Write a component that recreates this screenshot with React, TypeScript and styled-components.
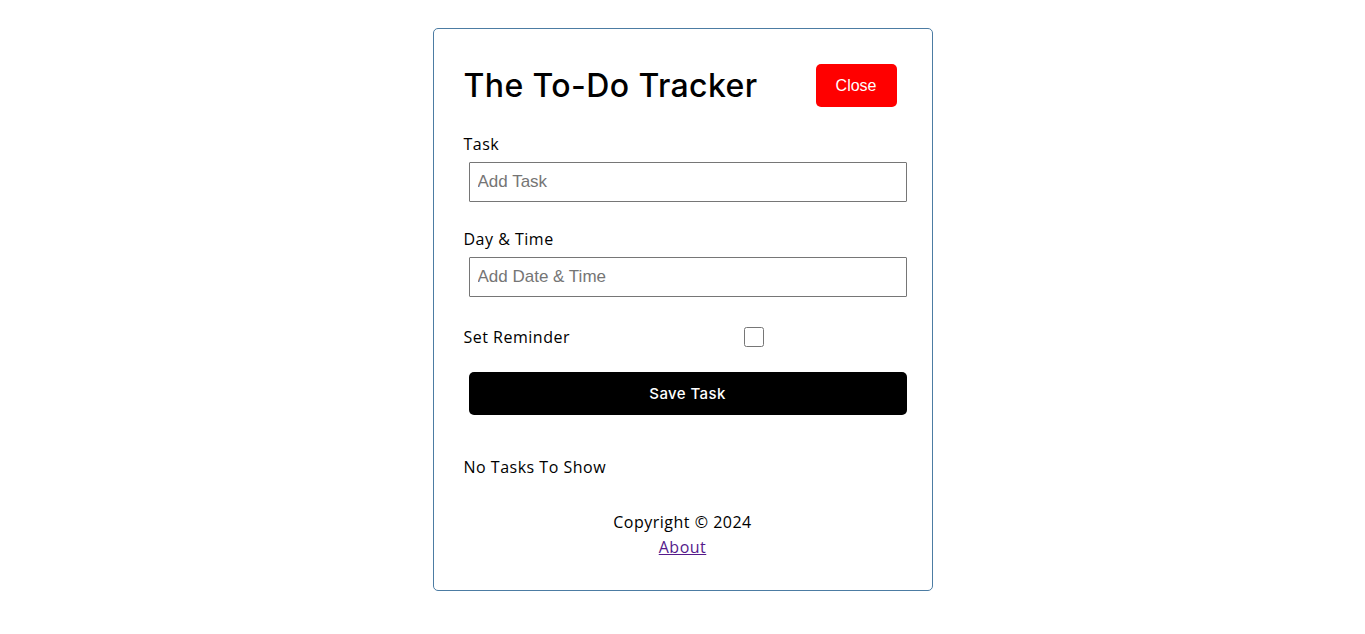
import React from "react";
import styled, { createGlobalStyle } from "styled-components";

const Global = createGlobalStyle`
  * { box-sizing: border-box; margin: 0; padding: 0; }
  body {
    margin: 0;
    background: #fff;
    font-family: "Open Sans", "Noto Sans", sans-serif;
    color: #000;
  }
`;

const Container = styled.div`
  max-width: 500px;
  margin: 28px auto 0;
  border: 1px solid #4c7ca3;
  border-radius: 5px;
  padding: 30px;
  min-height: 300px;
`;

const Header = styled.header`
  display: flex;
  justify-content: space-between;
  align-items: center;
  margin-bottom: 20px;
`;

const Title = styled.h1`
  font-family: Inter, "Open Sans", sans-serif;
  font-size: 32px;
  font-weight: 500;
  line-height: 48px;
  letter-spacing: 0.4px;
`;

const Btn = styled.button<{ $bg: string; $block?: boolean }>`
  display: ${(p) => (p.$block ? "block" : "inline-block")};
  width: ${(p) => (p.$block ? "100%" : "auto")};
  background: ${(p) => p.$bg};
  color: #fff;
  border: none;
  border-radius: 5px;
  padding: 10px 20px;
  margin: 5px;
  height: 43px;
  font-size: ${(p) => (p.$block ? "15px" : "16px")};
  font-family: ${(p) => (p.$block ? `Inter, "Open Sans", sans-serif` : `"Liberation Sans", Arial, sans-serif`)};
  font-weight: ${(p) => (p.$block ? 500 : 400)};
  letter-spacing: ${(p) => (p.$block ? "0.4px" : "0")};
  cursor: pointer;
`;

const Form = styled.form`
  margin-bottom: 40px;
`;

const Control = styled.div`
  margin: 20px 0;
  padding-bottom: 5px;
`;

const Label = styled.label`
  display: block;
  font-size: 16px;
  line-height: 24px;
  letter-spacing: 0.5px;
`;

const TextInput = styled.input`
  display: block;
  width: 100%;
  height: 40px;
  margin: 6px 5px 0;
  padding: 3px 8px;
  font-size: 17px;
  font-family: "Liberation Sans", Arial, sans-serif;
  border: 1px solid #767676;
  border-radius: 1px;
  &::placeholder { color: #757575; }
`;

const CheckRow = styled.div`
  display: flex;
  align-items: center;
  justify-content: space-between;
  margin: 20px 0;
  height: 30px;
`;

const CheckLabel = styled.label`
  flex: 1;
  font-size: 16px;
  line-height: 24px;
  letter-spacing: 0.5px;
`;

const CheckBox = styled.input`
  flex: 2;
  height: 20px;
  margin: 5px;
`;

const Empty = styled.h3`
  font-size: 16px;
  font-weight: 400;
  line-height: 24px;
  letter-spacing: 0.5px;
`;

const Footer = styled.footer`
  margin-top: 31px;
  text-align: center;
  font-size: 16px;
  line-height: 25px;
  letter-spacing: 0.5px;
`;

const AboutLink = styled.a`
  color: #551a8b;
  text-decoration: underline;
`;

export default function App() {
  return (
    <>
      <Global />
      <Container>
        <Header>
          <Title>The To-Do Tracker</Title>
          <Btn $bg="#ff0000" type="button">Close</Btn>
        </Header>
        <Form onSubmit={(e) => e.preventDefault()}>
          <Control>
            <Label>Task</Label>
            <TextInput type="text" placeholder="Add Task" />
          </Control>
          <Control>
            <Label>Day &amp; Time</Label>
            <TextInput type="text" placeholder="Add Date & Time" />
          </Control>
          <CheckRow>
            <CheckLabel>Set Reminder</CheckLabel>
            <CheckBox type="checkbox" />
          </CheckRow>
          <Btn $bg="#000" $block type="submit">Save Task</Btn>
        </Form>
        <Empty>No Tasks To Show</Empty>
        <Footer>
          <p>Copyright &copy; 2024</p>
          <AboutLink href="#about">About</AboutLink>
        </Footer>
      </Container>
    </>
  );
}
